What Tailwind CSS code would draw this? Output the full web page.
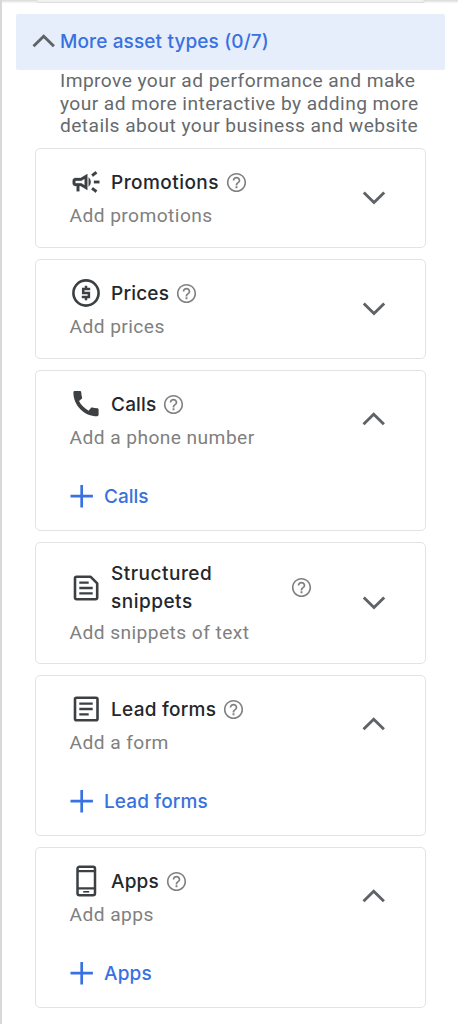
<!DOCTYPE html>
<html lang="en">
<head>
<meta charset="utf-8">
<title>More asset types</title>
<script src="https://cdn.jsdelivr.net/npm/@tailwindcss/browser@4"></script>
</head>
<body class="bg-white">
<svg class="hidden">
  <symbol id="help" viewBox="0 0 24 24"><path fill="currentColor" d="M11 18h2v-2h-2v2zm1-16C6.480 2 2 6.480 2 12s4.480 10 10 10 10-4.480 10-10S17.520 2 12 2zm0 18.300c-4.580 0-8.300-3.720-8.300-8.300s3.720-8.300 8.300-8.300 8.300 3.720 8.300 8.300-3.720 8.300-8.300 8.300zM12 6c-2.210 0-4 1.790-4 4h1.800c0-1.200 1-2.200 2.200-2.200s2.200 1 2.200 2.200c0 2-3.100 1.750-3.100 5h1.800c0-2.250 3.100-2.500 3.100-5 0-2.210-1.790-4-4-4z"/></symbol>
  <symbol id="down" viewBox="0 0 24 14"><path fill="none" stroke="currentColor" stroke-width="2.900" d="M1.800 1.500 12 11.500 22.200 1.500"/></symbol>
  <symbol id="up" viewBox="0 0 24 14"><path fill="none" stroke="currentColor" stroke-width="2.900" d="M1.500 12.300 11.700 2.300 21.900 12.300"/></symbol>
  <symbol id="plus" viewBox="0 0 24 24"><path fill="none" stroke="currentColor" stroke-width="2.700" d="M11.700 1v22.400M.5 12.200h22.400"/></symbol>
</svg>
<div class="relative h-[1024px] w-[458px] overflow-hidden border-l-2 border-[#d8d8d8] bg-white font-[Roboto,sans-serif]">
  <div class="h-[14px] bg-linear-to-b from-[#d9d9d9] to-white to-25%">
    <div class="ml-[34px] h-[3px] w-[389px] rounded-b-[4px] border border-t-0 border-[#dadce0] bg-[#f1f1f1]"></div>
  </div>
  <div class="ml-[14px] flex h-[56px] w-[429px] items-center rounded-[2px] bg-[#e6edfb] pl-[16px] font-[Inter,sans-serif] text-[19px] font-medium text-[#3871e0]">
    <svg class="-mt-[2px] h-[14px] w-[24px] text-[#5f6368]"><use href="#up"/></svg>
    <span class="ml-[4px] mt-[1px] whitespace-nowrap tracking-[0.13px]">More asset types (0/7)</span>
  </div>
  <p class="ml-[58px] whitespace-nowrap text-[19.200px] leading-[22.500px] tracking-[0.430px] text-[#666a6e]">Improve your ad performance and make<br>your ad more interactive by adding more<br>details about your business and website</p>

  <main class="ml-[33px] mt-[10.500px] flex w-[391px] flex-col gap-[11px] text-[19.200px] tracking-[0.430px] text-[#808080]">
    <section class="h-[100px] rounded-[5px] border border-[#e2e3e5] pl-[33.500px] pr-[39px]">
      <div class="flex h-[98px] items-center justify-between">
        <div class="h-full pt-[16px]">
          <div class="flex h-[34px] items-center">
            <svg class="h-[32px] w-[32px] text-[#3c4043]" viewBox="0 0 24 24" fill="currentColor" stroke="currentColor" stroke-width="0.200"><path d="M18 11v2h4v-2h-4zm-2 6.610c.96.710 2.210 1.650 3.200 2.390.4-.53.8-1.070 1.200-1.600-.99-.74-2.240-1.680-3.200-2.400-.4.540-.8 1.080-1.200 1.610zM20.400 5.600c-.4-.53-.8-1.070-1.200-1.600-.99.740-2.240 1.680-3.200 2.400.4.530.8 1.070 1.200 1.600.96-.72 2.210-1.650 3.200-2.400zM4 9c-1.100 0-2 .9-2 2v2c0 1.100.9 2 2 2h1v4h2v-4h1l5 3V6L8 9H4zm5.030 1.710L11 9.530v4.940l-1.970-1.180-.48-.29H4v-2h4.550l.48-.29zM15.500 12c0-1.330-.58-2.530-1.500-3.350v6.690c.92-.81 1.500-2.010 1.500-3.340z"/></svg>
            <span class="ml-[9.500px] mt-[3px] w-[113.500px] whitespace-nowrap font-[Inter,sans-serif] text-[19px] font-medium tracking-[0.450px] text-[#24272b]">Promotions</span>
            <svg class="h-[23px] w-[23px]"><use href="#help"/></svg>
          </div>
          <div class="mt-[6px] leading-[22px] whitespace-nowrap">Add promotions</div>
        </div>
        <svg class="h-[14px] w-[24px] text-[#5f6368]"><use href="#down"/></svg>
      </div>
    </section>

    <section class="h-[100px] rounded-[5px] border border-[#e2e3e5] pl-[33.500px] pr-[39px]">
      <div class="flex h-[98px] items-center justify-between">
        <div class="h-full pt-[16px]">
          <div class="flex h-[34px] items-center">
            <svg class="h-[32px] w-[32px] text-[#3c4043]" viewBox="0 0 32 32"><circle cx="16" cy="16" r="12.600" fill="none" stroke="currentColor" stroke-width="2.600"/><path fill="none" stroke="currentColor" stroke-width="2.500" d="M16 8.700v3M16 20v3.300M20.200 12.100h-7v4h5.700v3.900H11.800"/></svg>
            <span class="ml-[9.500px] mt-[3px] w-[63.500px] whitespace-nowrap font-[Inter,sans-serif] text-[19px] font-medium tracking-[0.200px] text-[#24272b]">Prices</span>
            <svg class="h-[23px] w-[23px]"><use href="#help"/></svg>
          </div>
          <div class="mt-[6px] leading-[22px] whitespace-nowrap">Add prices</div>
        </div>
        <svg class="h-[14px] w-[24px] text-[#5f6368]"><use href="#down"/></svg>
      </div>
    </section>

    <section class="h-[161px] rounded-[5px] border border-[#e2e3e5] pl-[33.500px] pr-[39px]">
      <div class="flex h-[98px] items-center justify-between">
        <div class="h-full pt-[16px]">
          <div class="flex h-[34px] items-center">
            <svg class="h-[34px] w-[32px] text-[#3c4043]" viewBox="0 0 32 34"><path fill="currentColor" transform="translate(-.8 -.2) scale(1.400)" d="M20.010 15.380c-1.230 0-2.420-.2-3.530-.56-.35-.12-.74-.03-1.010.24l-1.570 1.970c-2.830-1.350-5.480-3.900-6.890-6.830l1.950-1.660c.27-.28.350-.67.240-1.020-.37-1.110-.56-2.300-.56-3.530 0-.54-.45-.99-.99-.99H4.190C3.650 3 3 3.240 3 3.990 3 13.280 10.730 21 20.010 21c.71 0 .99-.63.990-1.180v-3.450c0-.54-.45-.99-.99-.99z"/></svg>
            <span class="ml-[9.500px] mt-[3px] w-[50.500px] whitespace-nowrap font-[Inter,sans-serif] text-[19px] font-medium tracking-[0.200px] text-[#24272b]">Calls</span>
            <svg class="h-[23px] w-[23px]"><use href="#help"/></svg>
          </div>
          <div class="mt-[6px] leading-[22px] whitespace-nowrap">Add a phone number</div>
        </div>
        <svg class="-mt-[3px] h-[14px] w-[24px] text-[#5f6368]"><use href="#up"/></svg>
      </div>
      <div class="mt-[13px] flex h-[28px] items-center gap-[10.500px] font-[Inter,sans-serif] text-[19px] font-medium text-[#3871e0]"><svg class="h-[24px] w-[24px]"><use href="#plus"/></svg><span class="mt-[2px] tracking-[0px]">Calls</span></div>
    </section>

    <section class="h-[122px] rounded-[5px] border border-[#e2e3e5] pl-[33.500px] pr-[39px]">
      <div class="flex h-[120px] items-center justify-between">
        <div class="h-full pt-[16px]">
          <div class="flex h-[57px] items-center">
            <svg class="h-[32px] w-[32px] text-[#3c4043]" viewBox="0 0 32 32" fill="none" stroke="currentColor"><path stroke-width="2.600" stroke-linejoin="round" d="M6.500 4.800h14.200l6.500 6.500v14.400a1.500 1.500 0 0 1-1.500 1.500H6.500A1.500 1.500 0 0 1 5 25.700V6.300a1.500 1.500 0 0 1 1.500-1.500z"/><path stroke-width="2.400" d="M9.300 10.600h9.400M9.300 16h13.400M9.300 21.400h13.400"/></svg>
            <span class="ml-[9.500px] w-[178.500px] font-[Inter,sans-serif] text-[19px] font-medium leading-[28px] tracking-[0.500px] text-[#24272b]">Structured<br>snippets</span>
            <svg class="h-[23px] w-[23px]"><use href="#help"/></svg>
          </div>
          <div class="mt-[6px] leading-[22px] whitespace-nowrap">Add snippets of text</div>
        </div>
        <svg class="h-[14px] w-[24px] text-[#5f6368]"><use href="#down"/></svg>
      </div>
    </section>

    <section class="h-[161px] rounded-[5px] border border-[#e2e3e5] pl-[33.500px] pr-[39px]">
      <div class="flex h-[98px] items-center justify-between">
        <div class="h-full pt-[16px]">
          <div class="flex h-[34px] items-center">
            <svg class="h-[32px] w-[32px] text-[#3c4043]" viewBox="0 0 32 32" fill="none" stroke="currentColor"><rect x="5" y="4.800" width="22.500" height="22.500" rx="1.500" stroke-width="2.600"/><path stroke-width="2.400" d="M9.300 10.600h13.400M9.300 16h13.400M9.300 21.400h9.400"/></svg>
            <span class="ml-[9.500px] mt-[3px] w-[110.500px] whitespace-nowrap font-[Inter,sans-serif] text-[19px] font-medium tracking-[0.270px] text-[#24272b]">Lead forms</span>
            <svg class="h-[23px] w-[23px]"><use href="#help"/></svg>
          </div>
          <div class="mt-[6px] leading-[22px] whitespace-nowrap">Add a form</div>
        </div>
        <svg class="-mt-[3px] h-[14px] w-[24px] text-[#5f6368]"><use href="#up"/></svg>
      </div>
      <div class="mt-[13px] flex h-[28px] items-center gap-[10.500px] font-[Inter,sans-serif] text-[19px] font-medium tracking-[0.130px] text-[#3871e0]"><svg class="h-[24px] w-[24px]"><use href="#plus"/></svg><span class="mt-[2px]">Lead forms</span></div>
    </section>

    <section class="h-[161px] rounded-[5px] border border-[#e2e3e5] pl-[33.500px] pr-[39px]">
      <div class="flex h-[98px] items-center justify-between">
        <div class="h-full pt-[16px]">
          <div class="flex h-[34px] items-center">
            <svg class="h-[34px] w-[32px] text-[#3c4043]" viewBox="0 0 32 34" fill="none" stroke="currentColor"><rect x="7.500" y="2.800" width="17.500" height="28.400" rx="2" stroke-width="2.500"/><path stroke-width="2.200" d="M7 7.200h18M7 24.300h18"/><path stroke-width="1.600" d="M13.200 27.800h6"/></svg>
            <span class="ml-[9.500px] mt-[3px] w-[53.500px] whitespace-nowrap font-[Inter,sans-serif] text-[19px] font-medium tracking-[0.200px] text-[#24272b]">Apps</span>
            <svg class="h-[23px] w-[23px]"><use href="#help"/></svg>
          </div>
          <div class="mt-[6px] leading-[22px] whitespace-nowrap">Add apps</div>
        </div>
        <svg class="-mt-[3px] h-[14px] w-[24px] text-[#5f6368]"><use href="#up"/></svg>
      </div>
      <div class="mt-[13px] flex h-[28px] items-center gap-[10.500px] font-[Inter,sans-serif] text-[19px] font-medium tracking-[0.200px] text-[#3871e0]"><svg class="h-[24px] w-[24px]"><use href="#plus"/></svg><span class="mt-[2px]">Apps</span></div>
    </section>
  </main>
</div>
</body>
</html>
